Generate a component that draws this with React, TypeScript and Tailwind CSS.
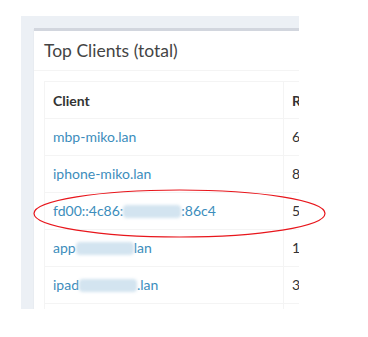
const rows: {name: React.ReactNode; count: string}[] = [
  {name: 'mbp-miko.lan', count: '6'},
  {name: 'iphone-miko.lan', count: '8'},
  {
    name: (
      <>
        fd00::4c86:
        <Smudge />
        :86c4
      </>
    ),
    count: '5',
  },
  {
    name: (
      <>
        app
        <Smudge />
        lan
      </>
    ),
    count: '1',
  },
  {
    name: (
      <>
        ipad
        <Smudge />
        .lan
      </>
    ),
    count: '3',
  },
];

// redacted part of a hostname
function Smudge() {
  return (
    <span
      aria-hidden
      className="inline-block h-[13px] w-[58px] align-[-2px] rounded-sm bg-[#d3e4f0] blur-[1.5px]"
    />
  );
}

export default function App() {
  return (
    <div className="relative h-[337px] w-[368px] bg-white font-['Lato','Open_Sans',sans-serif] text-[#333]">
      <div className="pl-[21px] pt-[16px]">
        <div className="h-[293px] w-[278px] overflow-hidden bg-[#ecf0f5] pl-[13px] pt-[12px]">
          <div className="w-[400px] border-t-[3px] border-[#d2d6de] bg-white shadow-[0_1px_1px_rgba(0,0,0,0.1)]">
            <div className="h-[40px] border-b border-[#f4f4f4] px-[10px] py-[10px]">
              <h3 className="text-[17.5px] leading-[20px] text-[#444]">Top Clients (total)</h3>
            </div>
            <div className="p-[10px]">
              <table className="w-[380px] border-collapse border border-[#f4f4f4] text-[14px]">
                <thead>
                  <tr className="h-[37px]">
                    <th className="w-[239px] border border-[#f4f4f4] px-[8px] text-left font-bold">
                      Client
                    </th>
                    <th className="border border-[#f4f4f4] px-[8px] text-left font-bold">
                      Requests
                    </th>
                  </tr>
                </thead>
                <tbody>
                  {rows.map((r, i) => (
                    <tr key={i} className="h-[37px]">
                      <td className="border border-[#f4f4f4] px-[8px] leading-[20px]">
                        <a href="#" className="whitespace-nowrap text-[#3c8dbc]">
                          {r.name}
                        </a>
                      </td>
                      <td className="border border-[#f4f4f4] px-[8px] leading-[20px]">{r.count}</td>
                    </tr>
                  ))}
                  <tr className="h-[37px]">
                    <td className="border border-[#f4f4f4]" />
                    <td className="border border-[#f4f4f4]" />
                  </tr>
                </tbody>
              </table>
            </div>
          </div>
        </div>
      </div>
      {/* annotation ring */}
      <svg className="pointer-events-none absolute left-0 top-0" width="368" height="337">
        <ellipse cx="179.5" cy="213.5" rx="145.5" ry="23.5" fill="none" stroke="#e8161c" strokeWidth="1.2" />
      </svg>
    </div>
  );
}
